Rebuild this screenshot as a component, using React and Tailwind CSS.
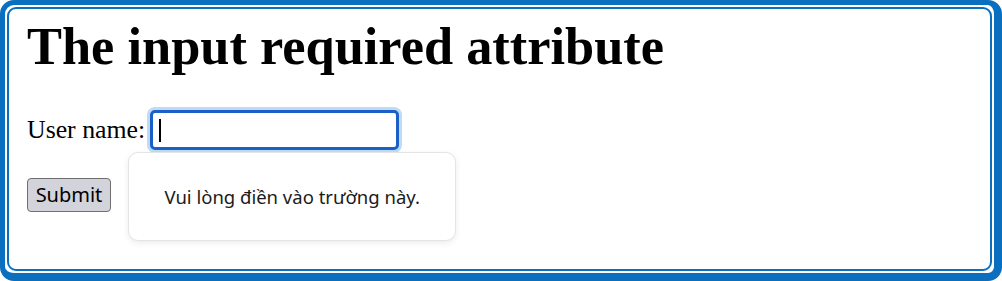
import React from 'react';

const App = () => {
  return (
    <div className="h-[281px] w-[1002px] bg-white">
      <div className="h-full w-full rounded-[14px] border-b-[8px] border-l-[5px] border-r-[8px] border-t-[5px] border-[#0b6fc0] bg-white p-[2px]">
        <div className="relative h-full rounded-[9px] border-2 border-[#0b6fc0] px-[18px] pt-[8px]">
          <h1 className="font-['Liberation_Serif',serif] text-[52.4px] font-bold leading-[58px] text-black">
            The input required attribute
          </h1>

          <div className="mt-[35px] flex items-center">
            <label className="font-['Liberation_Serif',serif] text-[25.8px] text-black">User name:</label>
            <div className="relative ml-[5px]">
              <div className="flex h-[40px] w-[249px] items-center rounded-[5px] border-[3px] border-[#1b5fc9] bg-white pl-[6px] shadow-[0_0_0_3px_#bcdcf7]">
                <span className="h-[23px] w-[2px] bg-black" />
              </div>
              <div className="absolute left-[-22px] top-[42px] z-10 flex h-[89px] w-[328px] items-center justify-center rounded-[10px] border border-[#e4e4e4] bg-white font-['Noto_Sans',sans-serif] text-[18.5px] text-[#1b1b1b] shadow-[0_2px_6px_rgba(0,0,0,0.08)]">
                Vui lòng điền vào trường này.
              </div>
            </div>
          </div>

          <button className="mt-[28px] flex h-[34px] w-[84px] items-center justify-center rounded-[4px] border border-[#6f6f6f] bg-[#d3d3db] font-['Noto_Sans',sans-serif] text-[20px] text-black">
            Submit
          </button>
        </div>
      </div>
    </div>
  );
};

export default App;
